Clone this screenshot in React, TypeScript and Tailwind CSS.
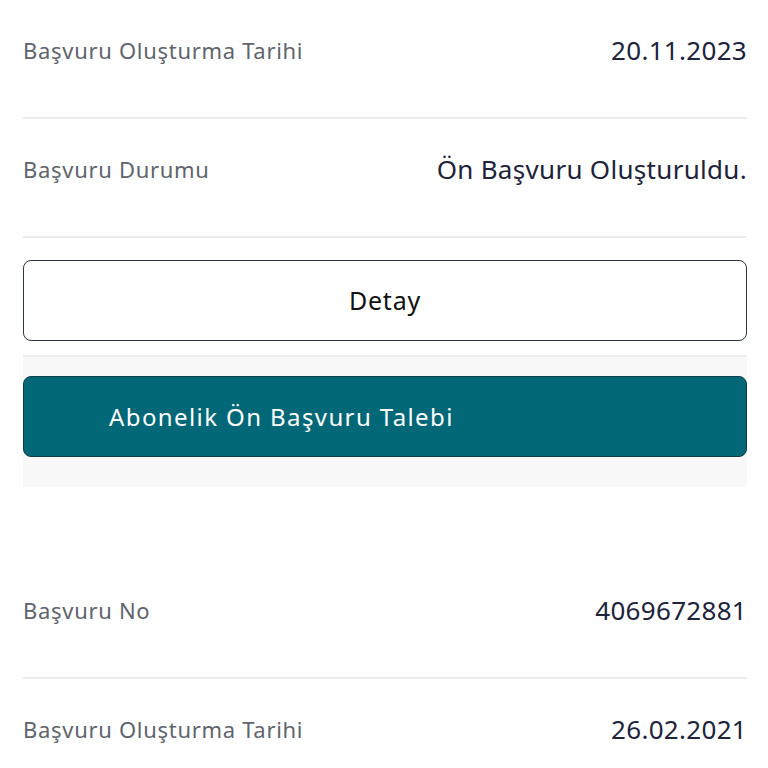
import React from 'react'

const font = { fontFamily: '"Noto Sans", Lato, sans-serif' }

function InfoRow({ label, value, last }: { label: string; value: string; last?: boolean }) {
  return (
    <div
      className={`flex items-center justify-between pt-[35px] pb-[52px] ${
        last ? '' : 'border-b-2 border-[#ececec]'
      }`}
    >
      <span className="text-[22px] leading-[30px] tracking-[0.7px] text-[#60646c]">{label}</span>
      <span className="text-[26px] leading-[30px] tracking-[0.3px] text-[#20233a]">{value}</span>
    </div>
  )
}

export default function App() {
  return (
    <div className="h-screen overflow-hidden bg-white pl-[23px] pr-[21px]" style={font}>
      <InfoRow label="Başvuru Oluşturma Tarihi" value="20.11.2023" />
      <InfoRow label="Başvuru Durumu" value="Ön Başvuru Oluşturuldu." />

      <button
        type="button"
        className="mt-[22px] flex h-[81px] w-full items-center justify-center rounded-[8px] border-[1.5px] border-[#2e3642] bg-white text-[25px] tracking-[0.8px] text-[#111111]"
      >
        Detay
      </button>

      <div className="mt-[14px] border-t-2 border-[#eeeeee] bg-[#f8f8f8] pt-[19px] pb-[30px]">
        <button
          type="button"
          className="flex h-[81px] w-full items-center rounded-[8px] border-[1.5px] border-[#0c3f4b] bg-[#026878] pl-[85px] text-[24px] tracking-[1.4px] text-white"
        >
          Abonelik Ön Başvuru Talebi
        </button>
      </div>

      <div className="pt-[73px]">
        <InfoRow label="Başvuru No" value="4069672881" />
        <InfoRow last label="Başvuru Oluşturma Tarihi" value="26.02.2021" />
      </div>
    </div>
  )
}
